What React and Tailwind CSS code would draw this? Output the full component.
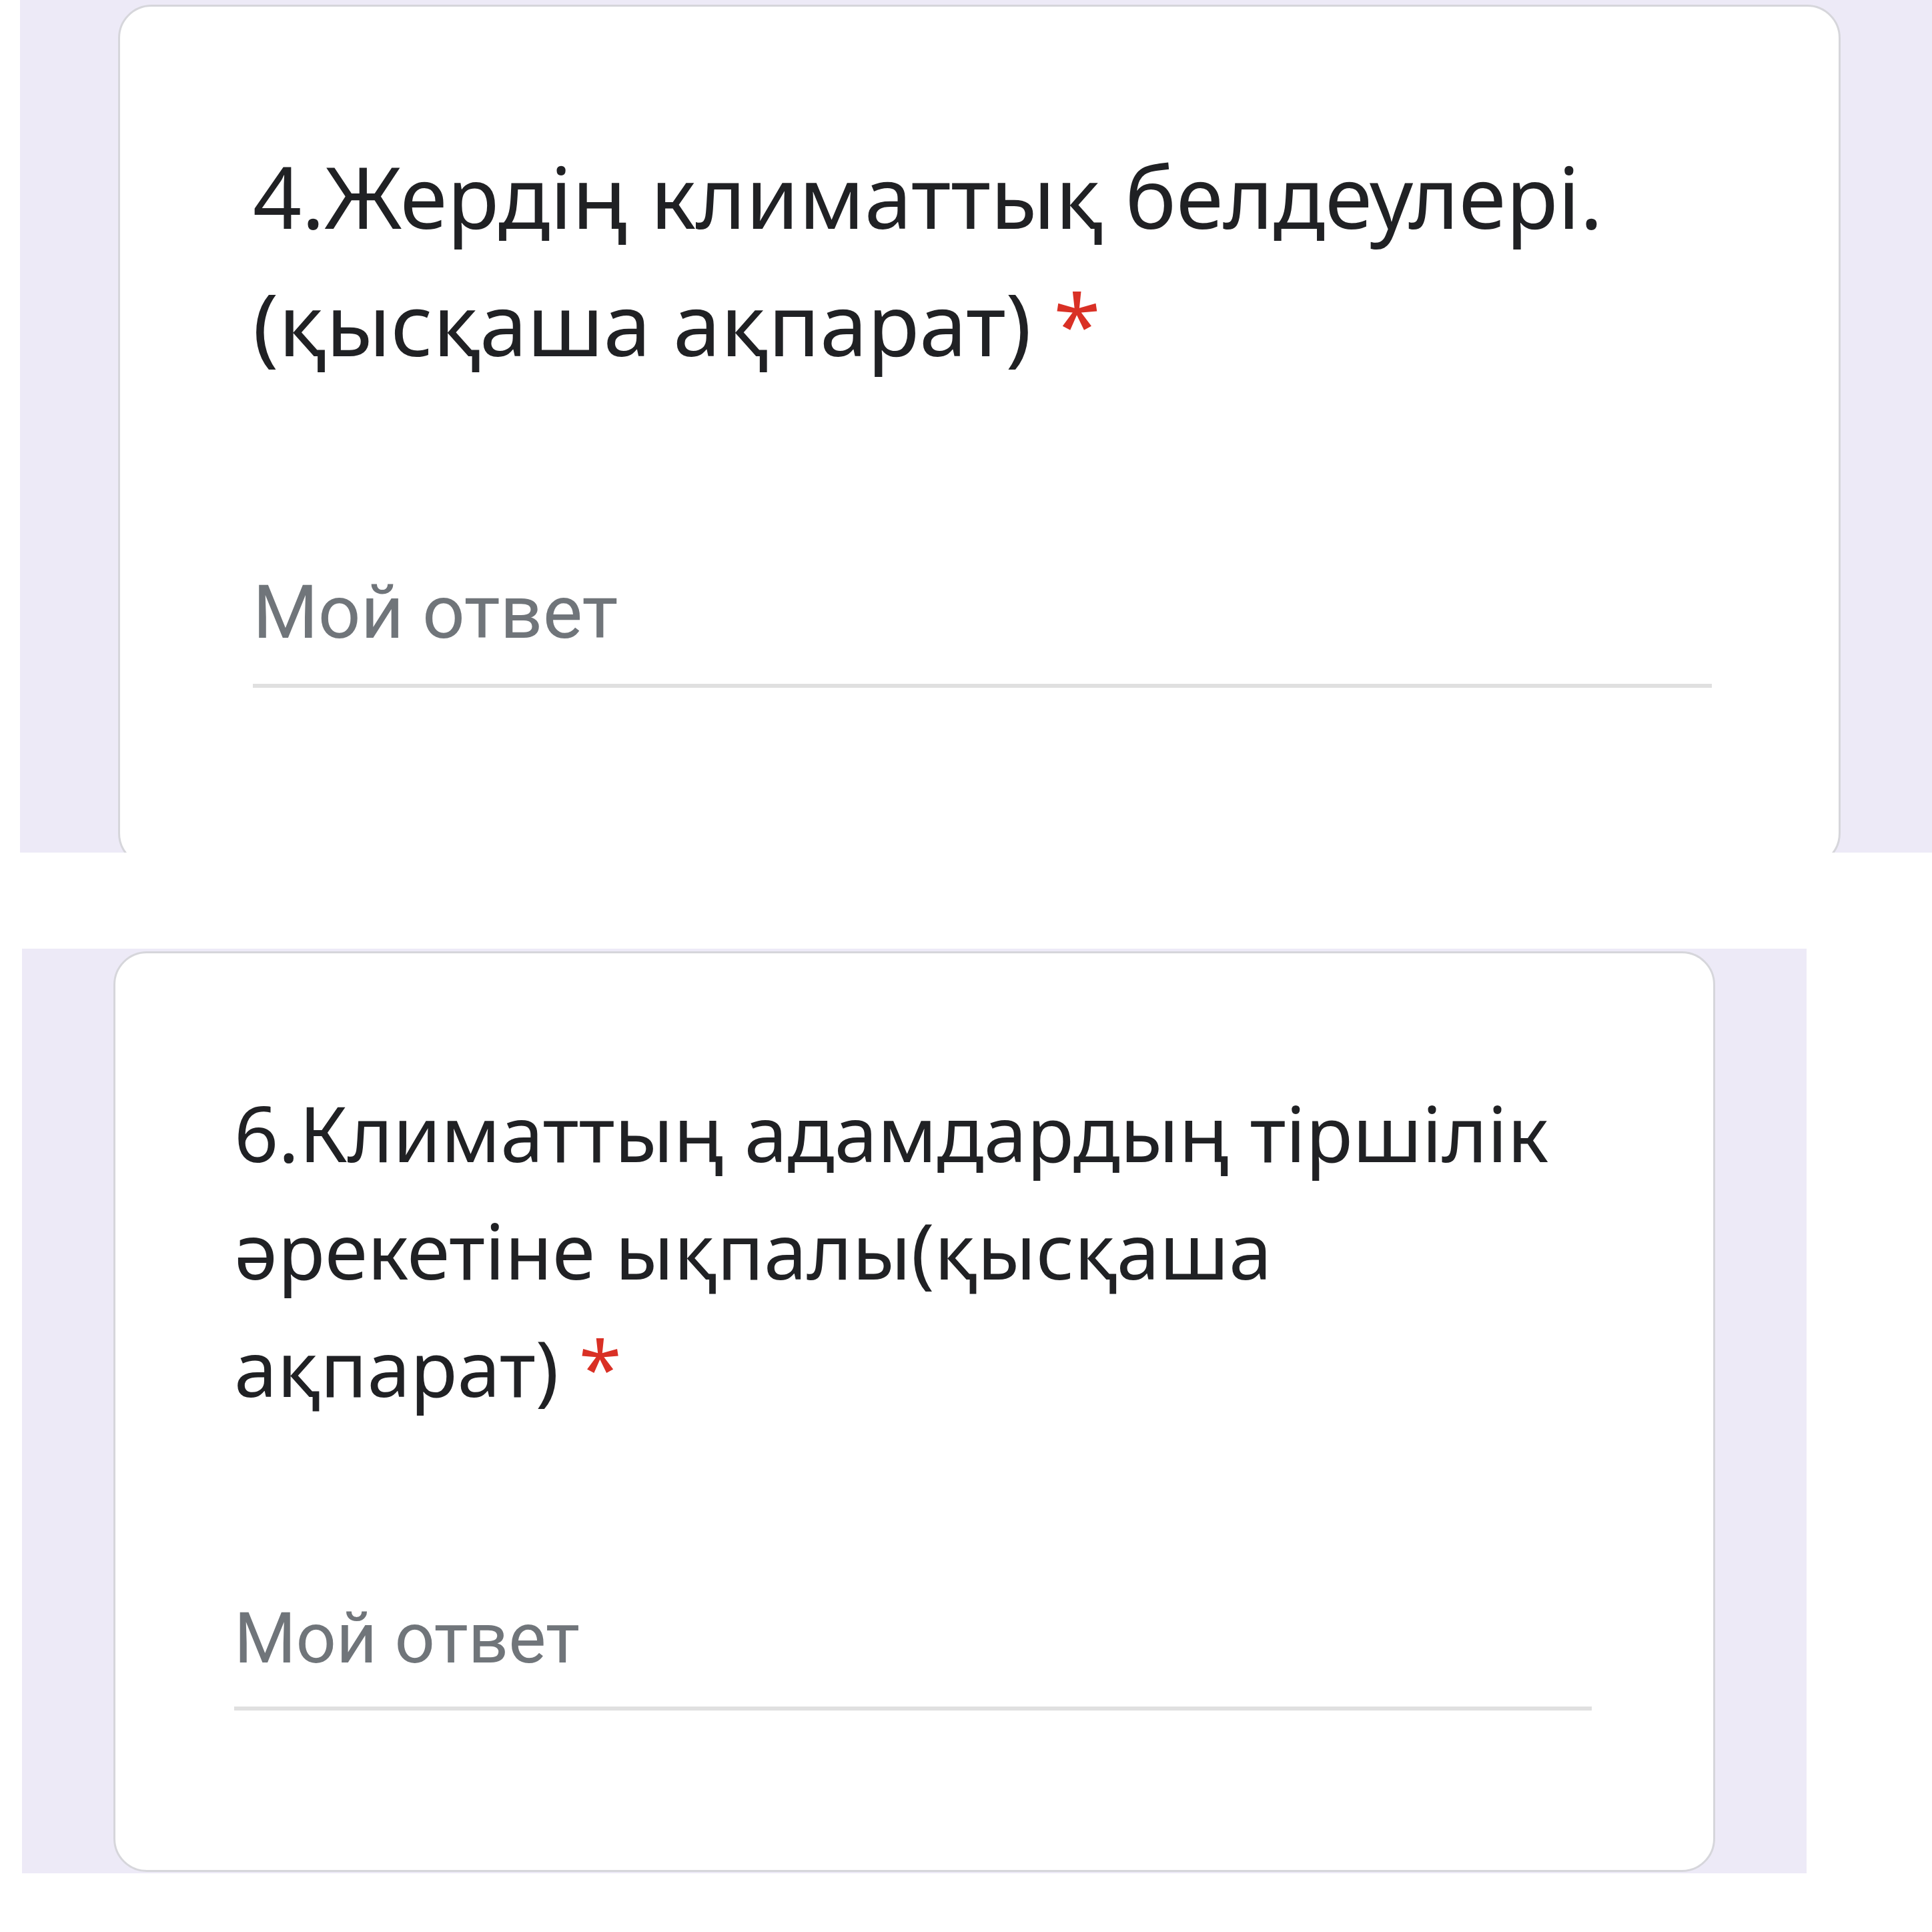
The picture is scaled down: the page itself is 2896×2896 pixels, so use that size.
import React from "react";

const questions = [
  {
    lines: ["4.Жердің климаттық белдеулері.", "(қысқаша ақпарат)"],
    panel: "ml-[30px] w-[2866px] h-[1278px]",
    card: "w-[2582px] h-[1292px] ml-[147px] mt-[7px] pl-[199px] pr-[190px] pt-[188px]",
    title: "text-[128px] leading-[191px]",
    answer: "mt-[282px] text-[112px] pb-[51px]",
  },
  {
    lines: ["6.Климаттың адамдардың тіршілік", "әрекетіне ықпалы(қысқаша", "ақпарат)"],
    panel: "ml-[33px] w-[2675px] h-[1386px]",
    card: "w-[2401px] h-[1380px] ml-[137px] mt-[4px] pl-[178px] pr-[182px] pt-[180px]",
    title: "text-[116px] leading-[176px]",
    answer: "mt-[266px] text-[106px] pb-[49px]",
  },
];

const QuestionCard = ({ q }) => (
  <div className={`${q.panel} bg-[#edeaf7] overflow-hidden`}>
    <div className={`${q.card} bg-white rounded-[50px] border-[3px] border-[#d6d6db] flex flex-col`}>
      <div className={`${q.title} text-[#202124] font-['Noto_Sans',sans-serif]`}>
        {q.lines.map((l, i) => (
          <div key={i}>
            {l}
            {i === q.lines.length - 1 && <span className="text-[#d93025]"> *</span>}
          </div>
        ))}
      </div>
      <div className={`${q.answer} text-[#70757a] font-['Roboto',sans-serif] leading-none border-b-[6px] border-[#e0e0e0]`}>
        Мой ответ
      </div>
    </div>
  </div>
);

export default function App() {
  return (
    <div className="w-[2896px] h-[2896px] bg-white flex flex-col gap-[144px]">
      {questions.map((q, i) => (
        <QuestionCard key={i} q={q} />
      ))}
    </div>
  );
}
